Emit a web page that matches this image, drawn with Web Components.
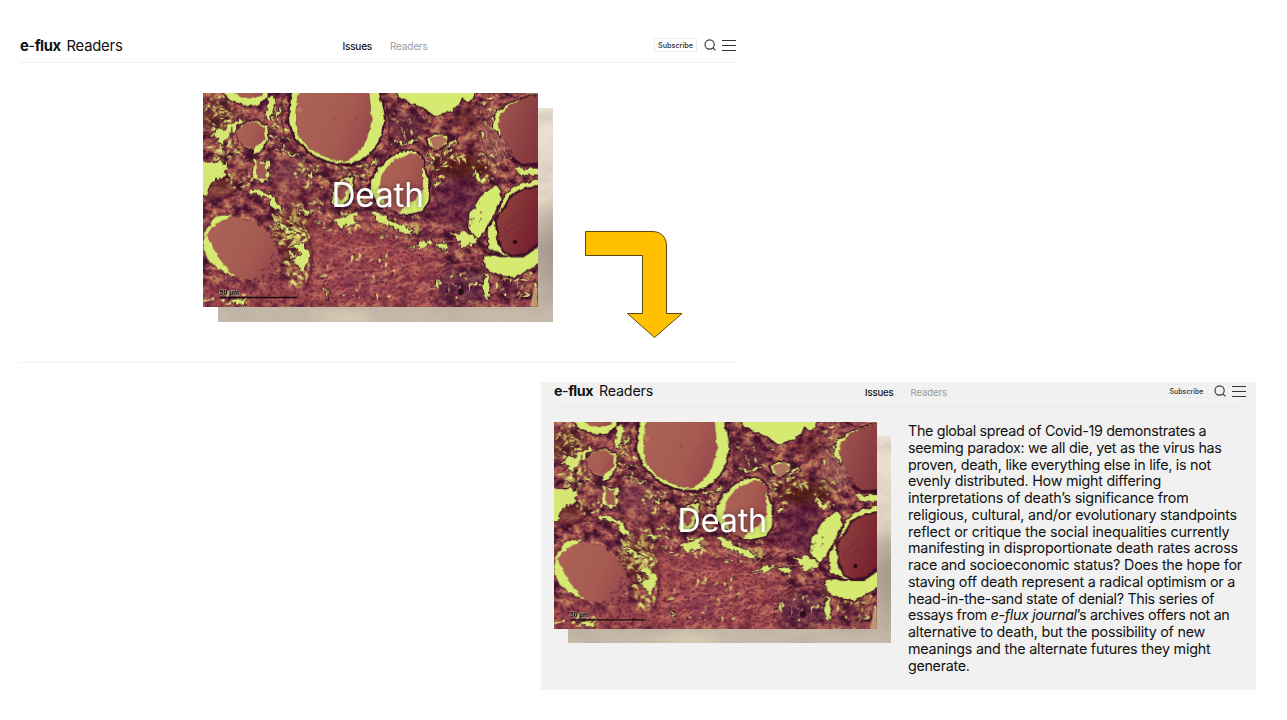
<!DOCTYPE html>
<html lang="en">
<head>
<meta charset="utf-8">
<title>e-flux Readers</title>
<style>
html,body{margin:0;background:#fff}
body{width:1287px;height:720px;overflow:hidden;font-family:Inter,"Liberation Sans",sans-serif}
</style>
</head>
<body>
<flow-board></flow-board>
<script>
const define = (name, html, after) => {
  const tpl = document.createElement('template');
  tpl.innerHTML = html;
  customElements.define(name, class extends HTMLElement {
    connectedCallback() {
      if (this.shadowRoot) return;
      this.attachShadow({ mode: 'open' }).append(tpl.content.cloneNode(true));
      if (after) after.call(this, this.shadowRoot);
    }
  });
};

// A single line of text tracked out or in to fill the width given in its attribute.
define('fit-line', `<style>:host{display:block;white-space:nowrap;width:max-content}span{display:inline-block}</style><span><slot></slot></span>`, function (root) {
  const span = root.querySelector('span');
  const want = +this.getAttribute('width');
  const n = this.textContent.length;
  const now = span.getBoundingClientRect().width;
  if (want && n > 1) span.style.letterSpacing = ((want - now) / n).toFixed(4) + 'px';
  this.style.width = want + 'px';
});

// Seeded generator so that both copies of the slide show the same tissue.
const random = seed => () => {
  seed = (seed * 1664525 + 1013904223) >>> 0;
  return seed / 4294967296;
};

define('tissue-image', `
<style>
:host{display:block;overflow:hidden;background:#944b4c}
svg{display:block;width:100%;height:100%}
</style>
<svg viewBox="10 9 1003 642" preserveAspectRatio="none" aria-hidden="true">
 <defs>
  <filter id="stroma" x="0" y="0" width="100%" height="100%" color-interpolation-filters="sRGB">
   <feTurbulence type="fractalNoise" baseFrequency=".03 .038" numOctaves="4" seed="8"/>
   <feColorMatrix values="2.2 0 0 0 -.62  2.2 0 0 0 -.62  2.2 0 0 0 -.62  0 0 0 0 1"/>
   <feComponentTransfer>
    <feFuncR type="table" tableValues=".27 .40 .52 .64 .72 .76"/>
    <feFuncG type="table" tableValues=".08 .17 .24 .32 .41 .54"/>
    <feFuncB type="table" tableValues=".17 .23 .27 .32 .35 .36"/>
   </feComponentTransfer>
  </filter>
  <filter id="grain" x="0" y="0" width="100%" height="100%" color-interpolation-filters="sRGB">
   <feTurbulence type="fractalNoise" baseFrequency=".1" numOctaves="2" seed="21"/>
   <feColorMatrix values="0 0 0 0 .24  0 0 0 0 .06  0 0 0 0 .2  4 0 0 0 -2"/>
  </filter>
  <filter id="rough" x="-10%" y="-10%" width="120%" height="120%" color-interpolation-filters="sRGB">
   <feTurbulence type="fractalNoise" baseFrequency=".05" numOctaves="2" seed="3"/>
   <feDisplacementMap in="SourceGraphic" scale="13" xChannelSelector="R" yChannelSelector="G"/>
  </filter>
  <filter id="ragged" x="-10%" y="-10%" width="120%" height="120%" color-interpolation-filters="sRGB">
   <feTurbulence type="fractalNoise" baseFrequency=".06" numOctaves="2" seed="12"/>
   <feDisplacementMap in="SourceGraphic" scale="28" xChannelSelector="R" yChannelSelector="G"/>
  </filter>
  <filter id="soft"><feGaussianBlur stdDeviation="14"/></filter>
  <filter id="edge"><feGaussianBlur stdDeviation="1.6"/></filter>
  <linearGradient id="colloid" x1="0" y1="0" x2="1" y2=".4"><stop offset="0" stop-color="#ac6456"/><stop offset=".7" stop-color="#a65b51"/><stop offset="1" stop-color="#9b4c4e"/></linearGradient>
  <linearGradient id="right" x1="0" y1="0" x2="1" y2=".5"><stop offset="0" stop-color="#a2584e"/><stop offset="1" stop-color="#84373f"/></linearGradient>
  <linearGradient id="dusk" x1="0" y1="0" x2="1" y2=".5"><stop offset="0" stop-color="#96483f"/><stop offset="1" stop-color="#741f30"/></linearGradient>
 </defs>
 <rect x="10" y="9" width="1003" height="642" filter="url(#stroma)"/>
 <g filter="url(#soft)">
  <path fill="#ae4e53" opacity=".6" d="M320 400 480 390 640 450 720 470 710 560 690 651H10V600L300 560Z"/>
  <ellipse cx="780" cy="340" rx="75" ry="85" fill="#53193c" opacity=".55"/>
  <ellipse cx="790" cy="232" rx="85" ry="35" fill="#4f150d" opacity=".8"/>
  <ellipse cx="625" cy="110" rx="50" ry="42" fill="#541b35" opacity=".55"/>
  <ellipse cx="785" cy="590" rx="85" ry="52" fill="#511b42" opacity=".55"/>
  <ellipse cx="940" cy="600" rx="50" ry="40" fill="#4d1930" opacity=".45"/>
  <ellipse cx="50" cy="80" rx="55" ry="50" fill="#5a2520" opacity=".55"/>
  <ellipse cx="65" cy="285" rx="38" ry="30" fill="#5b201c" opacity=".65"/>
  <ellipse cx="280" cy="440" rx="60" ry="80" fill="#62231a" opacity=".5"/>
  <ellipse cx="270" cy="245" rx="62" ry="42" fill="#874453" opacity=".7"/>
  <ellipse cx="330" cy="330" rx="60" ry="30" fill="#692639" opacity=".5"/>
  <ellipse cx="880" cy="150" rx="36" ry="70" fill="#b17360" opacity=".7"/>
  <ellipse cx="800" cy="85" rx="45" ry="30" fill="#5b1e24" opacity=".5"/>
  <ellipse cx="90" cy="610" rx="110" ry="28" fill="#933c4a" opacity=".5"/>
  <ellipse cx="480" cy="580" rx="60" ry="45" fill="#8d405c" opacity=".4"/>
 </g>
 <rect x="10" y="9" width="1003" height="642" filter="url(#grain)" opacity=".55"/>
 <g id="fibres" fill="none" filter="url(#rough)"></g>
 <g id="specks"></g>
 <g filter="url(#ragged)" fill="#d6e672" stroke="#40132a" stroke-width="3">
  <path d="M22 145 50 122 90 108 122 84 132 92 108 118 82 140 66 168 58 142Z"/>
  <path d="M-4 214 46 216 84 213 82 240 62 270 44 262 30 290 22 318-6 318Z"/>
  <path d="M220 8 228 30 222 66 207 92 196 66 207 30Z"/>
  <path d="M258 38 238 70 233 96 226 90 232 62Z"/>
  <path d="M160 210 206 214 212 268 190 276 158 264Z"/>
  <path d="M248 156 258 184 298 190 306 204 276 198 250 186Z"/>
  <path d="M152 296 190 302 224 322 246 352 244 374 214 350 206 326 156 312Z"/>
  <path d="M352 230 338 256 322 270 330 252Z"/>
  <path d="M550 194 526 220 502 236 516 216Z"/>
  <path d="M398 396 450 370 474 366 460 388 486 396 428 412Z"/>
  <path d="M508 360 540 364 580 394 620 412 640 430 602 424 544 400Z"/>
  <path d="M620 476 660 460 696 448 684 468 650 476Z"/>
  <path d="M706 464 736 456 752 468 736 482 708 482Z"/>
  <path d="M744 424 780 430 800 426 834 442 820 468 786 470 772 446Z"/>
  <path d="M670 160 682 182 706 204 702 222 684 202Z"/>
  <path d="M722 190 752 160 774 142 770 160Z"/>
  <path d="M574 150 610 154 662 146 660 153 620 163 578 158Z"/>
  <path d="M270 466 302 456 326 480 332 508 306 544 284 514 304 490Z"/>
  <path d="M216 388 262 410 290 428 260 434 238 412Z"/>
  <path d="M262 478 276 506 284 504 274 480Z"/>
  <path d="M706 276 728 270 712 304Z"/>
  <path d="M826 238 862 274 846 284 820 262Z"/>
  <path d="M852 536 872 578 868 636 850 600Z"/>
  <path d="M82 628 146 624 132 650 108 640Z"/>
  <path d="M704 570 724 564 722 598 706 590Z"/>
  <path d="M368 582 386 606 382 630Z"/>
  <path d="M296 356 340 362 330 372 300 370Z"/>
  <path d="M936 230 1034 239 1034 262 952 251Z"/>
 </g>
 <path d="M1003 590 992 651H1013V592Z" fill="#c9a276" opacity=".9"/>
 <g fill="none" stroke="#4c1831" stroke-width="5" opacity=".65" filter="url(#rough)">
  <path d="M252 20C236 90 248 160 310 206S420 246 500 232 570 150 568 80L556 20"/>
  <path d="M10 345Q60 320 110 316T210 350 290 400 334 480 312 600"/>
  <path d="M702 260Q712 190 790 180T900 250M500 340Q540 384 640 388T712 330 700 240"/>
  <path d="M706 560Q720 520 790 515T850 570M716 580Q730 630 800 640"/>
  <path d="M376 370Q372 300 414 248H470M96 110Q90 190 170 205L222 190"/>
 </g>
 <g filter="url(#rough)" stroke="#3e1028" stroke-width="4" fill="#d6ea71">
  <path d="M60 0 90 29 133 48 178 44 205 25 207 0Z"/>
  <path fill="url(#colloid)" stroke="none" d="M92 0 123 22 157 26 188 16 194 -8Z"/>
  <path d="M575 -9 598 24 636 42 676 58 704 80 758 64 778 48 788 25 812 38 842 -9Z"/>
  <path stroke-width="7" d="M278 -10C254 82 266 144 325 184 368 220 425 230 480 218 538 180 570 112 550 54L538 -10Z"/>
  <path stroke="#7a3a32" stroke-width="2" fill="url(#colloid)" d="M307 -10C287 40 281 88 298 138 330 188 379 202 430 215 480 198 512 142 515 80L506 -10Z"/>
  <path d="M106 126 128 100 168 92 204 106 208 140 190 180 164 192 160 180 130 172Z"/>
  <path stroke="none" fill="url(#colloid)" d="M107 126 134 101 170 96 196 112 194 148 164 179 126 166 116 145Z"/>
  <path stroke="none" fill="#a05c51" d="M170 218 198 218 200 266 174 268Z"/>
  <path stroke-width="5" d="M678 146 704 130 746 136 744 164 718 180 690 170Z"/>
  <path stroke="none" fill="#b0725d" d="M690 144 724 136 744 150 728 172 704 178Z"/>
  <path stroke-width="6" d="M508 284 524 250C560 196 600 177 646 182L666 196 676 234 692 286 690 334 668 366 620 377 588 370 578 356 528 338 514 310Z"/>
  <path stroke="none" fill="url(#colloid)" d="M544 258C572 208 615 188 656 192L670 214 670 290 652 326 620 350 592 368 562 352 538 310Z"/>
  <path d="M392 340 406 284 430 262 462 258 458 304 434 348 406 354Z"/>
  <path stroke="none" fill="#9c4f4b" d="M408 300 438 266 446 278 438 318 424 330 416 322Z"/>
  <path d="M1030 12C958 20 918 36 884 74L878 110 902 144 910 120 904 90 924 56 965 28 1030 18Z"/>
  <path stroke="none" fill="url(#right)" d="M1030 13C966 20 920 42 895 85L902 132 936 180 950 213 984 226 1030 218Z"/>
  <path fill="none" stroke-width="11" d="M936 206C956 224 985 235 1026 216"/>
  <path d="M890 281 905 303 904 336 882 376 856 426 836 448 806 422 810 370 840 320Z"/>
  <path d="M1030 266C974 274 940 286 914 314L908 334 889 378 862 420 864 474 900 492 854 497 856 534 894 556 944 564 990 536 1030 516Z"/>
  <path stroke-width="6" fill="url(#dusk)" d="M1030 288C970 288 934 308 918 346L888 386 894 444 910 484 938 498 984 490 1030 448Z"/>
  <path fill="none" stroke-width="7" d="M850 486 902 498 970 499 1024 462"/>
  <path stroke="#76383d" d="M102 370 44 378 17 420 8 458 20 504 48 534 100 560 130 550 80 510 46 440Z"/>
  <path stroke="none" fill="url(#colloid)" d="M100 380 60 396 34 412 22 436 52 498 92 548 142 572 196 574 234 536 244 496 216 446 166 396Z"/>
 </g>
 <g filter="url(#edge)">
  <circle cx="946" cy="456" r="6" fill="#260714"/><circle cx="783" cy="605" r="9" fill="#240a18"/>
  <circle cx="404" cy="85" r="4" fill="#86403f" opacity=".5"/><circle cx="470" cy="85" r="2" fill="#6c2936" opacity=".7"/>
  <circle cx="298" cy="60" r="8" fill="#bf7c64" opacity=".8"/>
  <path d="M910 420q30-40 54-50m-70 74q35-30 66-40" fill="none" stroke="#6f2735" stroke-width="2"/>
 </g>
 <g id="nuclei" fill="#5c2442"></g>
 <text x="60" y="615" font-family="Liberation Sans, sans-serif" font-size="21" font-weight="700" textLength="59" fill="#1d1218" stroke="#a58479" stroke-width="4" paint-order="stroke">50 µm</text>
 <path d="M60 622.500H293" stroke="#15080c" stroke-width="4"/>
</svg>`, function (root) {
  const r = random(411);
  const specks = [], fibres = [], nuclei = [];
  // [cx, cy, rx, ry, count, size] for each patch of bright gaps
  for (const [cx, cy, rx, ry, n, s] of [
    [60,70,50,55,45,6],[80,185,70,30,35,7],[130,270,50,30,20,6],[225,130,45,70,30,6],[270,420,60,60,60,9],
    [290,540,38,55,34,8],[340,240,60,60,26,7],[460,255,60,40,26,7],[420,400,90,30,20,7],[600,425,110,20,22,8],
    [740,225,60,40,18,7],[860,230,40,45,20,6],[740,170,50,26,16,7],[640,90,60,60,24,5],[780,590,80,50,20,6],
    [950,580,60,50,30,7],[500,560,140,70,30,6],[90,630,80,18,16,7],[860,80,40,60,20,6],[330,350,55,22,18,7],[600,395,70,25,12,7]]) {
    for (let i = 0; i < n; i++) {
      const a = r() * 6.283, d = Math.sqrt(r());
      const x = cx + Math.cos(a) * rx * d, y = cy + Math.sin(a) * ry * d;
      const w = s * (.6 + r() * 1.5), h = s * (.3 + r() * .6), t = r() * 180 | 0;
      specks.push(`<path transform="translate(${x.toFixed(1)} ${y.toFixed(1)}) rotate(${t})" d="M${-w} 0L${-w * .2} ${-h}L${w * .5} ${-h * .3}L${w} ${h * .4}L${w * .1} ${h * .5}L${-w * .6} ${h}Z" fill="${['#cfcf6b','#dbe677','#b49152'][r() * 3 | 0]}" opacity="${(.7 + r() * .3).toFixed(2)}"/>`);
    }
  }
  for (let i = 0; i < 190; i++) {
    const x = 310 + r() * 420, y = 385 + r() * 240, l = 25 + r() * 60;
    const k = y < 480 ? (x < 520 ? .35 : -.3) : -.5 + r() * .5;
    fibres.push(`<path d="M${x.toFixed(0)} ${y.toFixed(0)}q${(l / 2).toFixed(0)} ${(l * k - 10).toFixed(0)} ${l.toFixed(0)} ${(l * k).toFixed(0)}" stroke="${['#c77366','#7c2d43','#cf826b','#8a3649'][r() * 4 | 0]}" stroke-width="${(2 + r() * 2).toFixed(1)}" opacity=".75"/>`);
  }
  for (let i = 0; i < 45; i++) {
    const x = 840 + r() * 70, y = 70 + r() * 130;
    fibres.push(`<path d="M${x.toFixed(0)} ${y.toFixed(0)}q10 18 ${(8 + r() * 20).toFixed(0)} 38" stroke="${['#d19b78','#7b3a47'][r() * 2 | 0]}" stroke-width="2.500" opacity=".8"/>`);
  }
  for (let i = 0; i < 520; i++) {
    let x, y;
    if (i < 130) { const a = -1.1 + r() * 2.7, d = 110 + r() * 55; x = 110 + Math.cos(a) * d; y = 475 + Math.sin(a) * d * .82; }
    else if (i < 220) { x = 715 + r() * 130; y = 270 + r() * 140; }
    else if (i < 310) { x = 705 + r() * 150; y = 535 + r() * 110; }
    else if (i < 350) { x = 585 + r() * 80; y = 75 + r() * 70; }
    else { x = 330 + r() * 370; y = 410 + r() * 235; }
    nuclei.push(`<circle cx="${x.toFixed(0)}" cy="${y.toFixed(0)}" r="${(1.8 + r() * 2.4).toFixed(1)}" opacity="${(.4 + r() * .4).toFixed(2)}"/>`);
  }
  root.getElementById('specks').innerHTML = specks.join('');
  root.getElementById('fibres').innerHTML = fibres.join('');
  root.getElementById('nuclei').innerHTML = nuclei.join('');
});

define('issue-cover', `
<style>
:host{display:grid;width:var(--w);height:var(--h);box-sizing:border-box}
tissue-image,.paper,fit-line{grid-area:1/1}
tissue-image{width:var(--w);height:var(--h);z-index:1}
.paper{width:var(--w);height:var(--h);margin:var(--off) 0 0 var(--off);
 background:radial-gradient(ellipse 22px 60px at 100% 68%,#9c9080aa,transparent),radial-gradient(ellipse 55px 12px at 38% 98%,#dcd0b8bb,transparent),linear-gradient(180deg,#ebe1d3 0,#e4d8c7 42%,#b4a898 65%,#beb2a3 80%,#c6bbaa 100%)}
.paper svg{display:block;width:100%;height:100%;opacity:.28}
fit-line{place-self:start;margin:var(--ty) 0 0 var(--tx);font-size:var(--fs);line-height:1;color:#fff;text-shadow:0 0 5px #0008;z-index:2}
</style>
<div class="paper"><svg><filter id="p" x="0" y="0" width="100%" height="100%"><feTurbulence type="fractalNoise" baseFrequency=".03 .06" numOctaves="4" seed="5"/><feColorMatrix values="0 0 0 0 .4 0 0 0 0 .35 0 0 0 0 .3 2.4 0 0 0 -.95"/></filter><rect width="100%" height="100%" filter="url(#p)"/></svg></div>
<tissue-image></tissue-image>
<fit-line>Death</fit-line>`, function (root) {
  const line = root.querySelector('fit-line');
  line.setAttribute('width', this.getAttribute('title-width'));
  line.replaceWith(line.cloneNode(true));
});

define('site-header', `
<style>
:host{display:flex;align-items:flex-start;box-sizing:border-box;color:#111;border-bottom:1px solid var(--rule);height:var(--head)}
.brand{display:flex;width:var(--brand);gap:var(--bgap);font-size:var(--big);line-height:18px;padding-top:var(--btop)}
b{font-weight:700}i{font-style:normal;font-weight:400}
nav{display:flex;gap:var(--ngap);flex:1;font-size:var(--nav);line-height:14px;padding-top:var(--ntop);font-weight:500}
.off{color:#9b9b9b;font-weight:400}
.tools{display:flex;align-items:center;padding:var(--ttop) 1px 0 0}
button{font:500 var(--sub)/9px Inter,"Liberation Sans",sans-serif;color:#333;background:none;border:1px solid var(--box);padding:2px 3px;margin:0;height:14px;box-sizing:border-box;display:flex}
svg{display:block;fill:none;stroke:#333;stroke-width:1.1}
.find{width:12px;height:12px;margin:0 6.500px 0 var(--fgap)}.menu{width:14px;height:12px}
</style>
<div class="brand"><fit-line id="a"><b>e</b><i>-</i><b>flux</b></fit-line><fit-line id="b">Readers</fit-line></div>
<nav><fit-line id="c">Issues</fit-line><fit-line id="d" class="off">Readers</fit-line></nav>
<div class="tools"><button><fit-line id="e">Subscribe</fit-line></button>
<svg class="find" viewBox="0 0 12 12"><circle cx="5.600" cy="5.500" r="4.600"/><path d="m8.900 8.900 2.500 2.500"/></svg>
<svg class="menu" viewBox="0 0 14 12"><path d="M0 1.500h14M0 6.500h14M0 11.500h14"/></svg></div>`, function (root) {
  const widths = this.getAttribute('widths').split(' ');
  [...'abcde'].forEach((id, i) => {
    const el = root.getElementById(id);
    el.setAttribute('width', widths[i]);
    el.replaceWith(el.cloneNode(true));
  });
});

define('bent-arrow', `<style>:host{display:block}svg{display:block;width:100%;height:100%}</style>
<svg viewBox="0 0 98 108"><path d="M.5.500H67C76 .5 81.500 6 81.500 15V82.500H97L69.500 106.500 42.500 82.500H57.500V24.500H.5Z" fill="#ffc000" stroke="#5b4710" stroke-width="1"/></svg>`);

define('issue-text', `<style>:host{display:block;color:#111;font-size:14.300px;line-height:16.760px}em{font-style:italic}</style>
<fit-line width="298.300">The global spread of Covid-19 demonstrates a</fit-line>
<fit-line width="313.600">seeming paradox: we all die, yet as the virus has</fit-line>
<fit-line width="303">proven, death, like everything else in life, is not</fit-line>
<fit-line width="253">evenly distributed. How might differing</fit-line>
<fit-line width="280.500">interpretations of death’s significance from</fit-line>
<fit-line width="329">religious, cultural, and/or evolutionary standpoints</fit-line>
<fit-line width="321.500">reflect or critique the social inequalities currently</fit-line>
<fit-line width="330">manifesting in disproportionate death rates across</fit-line>
<fit-line width="334">race and socioeconomic status? Does the hope for</fit-line>
<fit-line width="327">staving off death represent a radical optimism or a</fit-line>
<fit-line width="306.300">head-in-the-sand state of denial? This series of</fit-line>
<fit-line width="321.500">essays from <em>e-flux journal</em>’s archives offers not an</fit-line>
<fit-line width="297">alternative to death, but the possibility of new</fit-line>
<fit-line width="302.500">meanings and the alternate futures they might</fit-line>
<fit-line width="61.500">generate.</fit-line>`);

define('flow-board', `
<style>
:host{display:flex;flex-direction:column;width:1287px;height:720px;box-sizing:border-box;position:relative;background:#fff}
.first{box-sizing:border-box;width:717px;height:343px;margin:20px 0 0 20px;border-bottom:1px solid #f0f0f0}
.second{box-sizing:border-box;width:715px;height:308px;margin:19px 0 0 541px;padding:0 9px 0 13px;background:#f1f1f1}
.first site-header{--rule:#f0f0f0;--box:#eee;--head:43px;--brand:322.500px;--bgap:6px;--big:14.800px;--btop:16.500px;--ngap:18px;--nav:10px;--ntop:19px;--sub:7.300px;--ttop:18px;--fgap:6.500px}
.second site-header{--rule:#ebebeb;--box:#ececec;--head:26px;--brand:311px;--bgap:6px;--big:14.300px;--btop:0px;--ngap:17px;--nav:9.600px;--ntop:4px;--sub:7px;--ttop:2px;--fgap:6px}
.first issue-cover{--w:334.300px;--h:214px;--off:15px;--tx:128px;--ty:85.500px;--fs:33.500px;margin:30px 0 0 183.400px}
.second issue-cover{--w:323px;--h:207px;--off:14px;--tx:123.500px;--ty:82.500px;--fs:32.300px;margin-top:14px}
.body{display:flex;align-items:flex-start}
issue-text{margin:15px 0 0 31px}
bent-arrow{position:absolute;left:585px;top:231px;width:98px;height:108px}
</style>
<section class="first"><site-header widths="40.500 56 29.500 37.500 35"></site-header><issue-cover title-width="92.500"></issue-cover></section>
<section class="second"><site-header widths="39 54 28.500 36.500 34"></site-header><div class="body"><issue-cover title-width="89.500"></issue-cover><issue-text></issue-text></div></section>
<bent-arrow></bent-arrow>`);
</script>
</body>
</html>
